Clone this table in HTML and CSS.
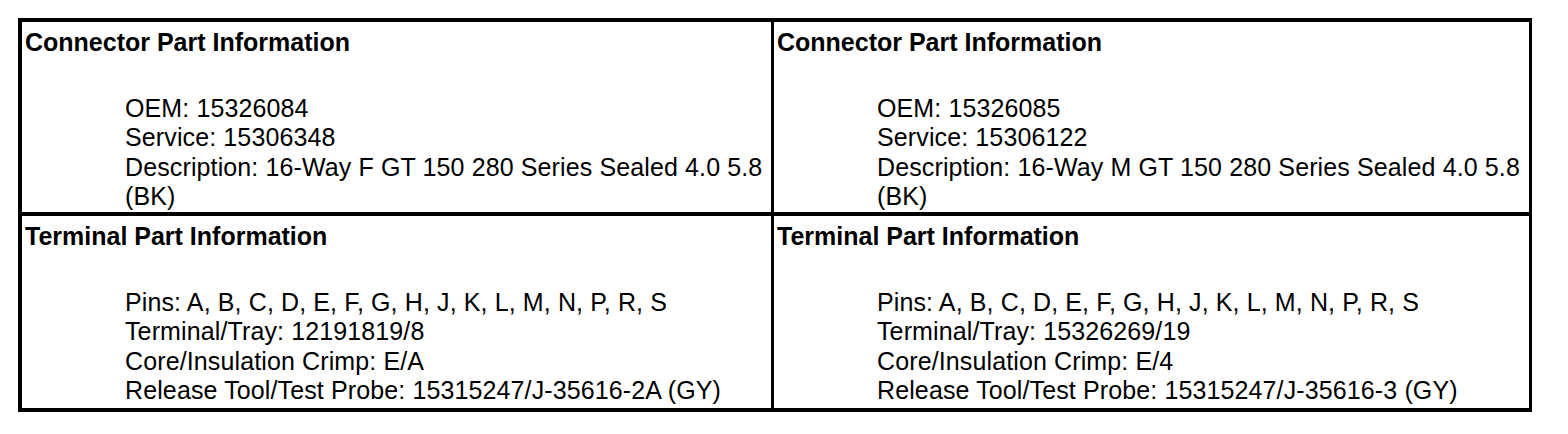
FILE: index.html
```html
<!DOCTYPE html>
<html>
<head>
<meta charset="utf-8">
<link rel="stylesheet" href="styles.css">
</head>
<body>
<div class="table">
  <div class="cell">
    <div class="title">Connector Part Information</div>
    <div class="details">
      <div>OEM: 15326084</div>
      <div>Service: 15306348</div>
      <div>Description: 16-Way F GT 150 280 Series Sealed 4.0 5.8 (BK)</div>
    </div>
  </div>
  <div class="cell">
    <div class="title">Connector Part Information</div>
    <div class="details">
      <div>OEM: 15326085</div>
      <div>Service: 15306122</div>
      <div>Description: 16-Way M GT 150 280 Series Sealed 4.0 5.8 (BK)</div>
    </div>
  </div>
  <div class="cell">
    <div class="title">Terminal Part Information</div>
    <div class="details">
      <div>Pins: A, B, C, D, E, F, G, H, J, K, L, M, N, P, R, S</div>
      <div>Terminal/Tray: 12191819/8</div>
      <div>Core/Insulation Crimp: E/A</div>
      <div>Release Tool/Test Probe: 15315247/J-35616-2A (GY)</div>
    </div>
  </div>
  <div class="cell">
    <div class="title">Terminal Part Information</div>
    <div class="details">
      <div>Pins: A, B, C, D, E, F, G, H, J, K, L, M, N, P, R, S</div>
      <div>Terminal/Tray: 15326269/19</div>
      <div>Core/Insulation Crimp: E/4</div>
      <div>Release Tool/Test Probe: 15315247/J-35616-3 (GY)</div>
    </div>
  </div>
</div>
</body>
</html>
```
FILE: styles.css
```css
html, body {
  margin: 0;
  padding: 0;
  background: #ffffff;
}
body {
  font-family: "Liberation Sans", Arial, sans-serif;
  color: #000000;
  font-size: 25px;
  line-height: 29.5px;
}
.table {
  margin: 18px 0 0 18px;
  width: 1514px;
  height: 394px;
  box-sizing: border-box;
  border: 4px solid #000000;
  border-right-width: 3px;
  background: #000000;
  display: grid;
  grid-template-columns: 749px 755px;
  grid-template-rows: 190px 192px;
  column-gap: 3px;
  row-gap: 4px;
}
.cell {
  background: #ffffff;
  padding: 6px 6px 0 3px;
}
.title {
  font-weight: bold;
}
.details {
  margin-top: 36px;
  padding-left: 100px;
  letter-spacing: 0.12px;
}
```
